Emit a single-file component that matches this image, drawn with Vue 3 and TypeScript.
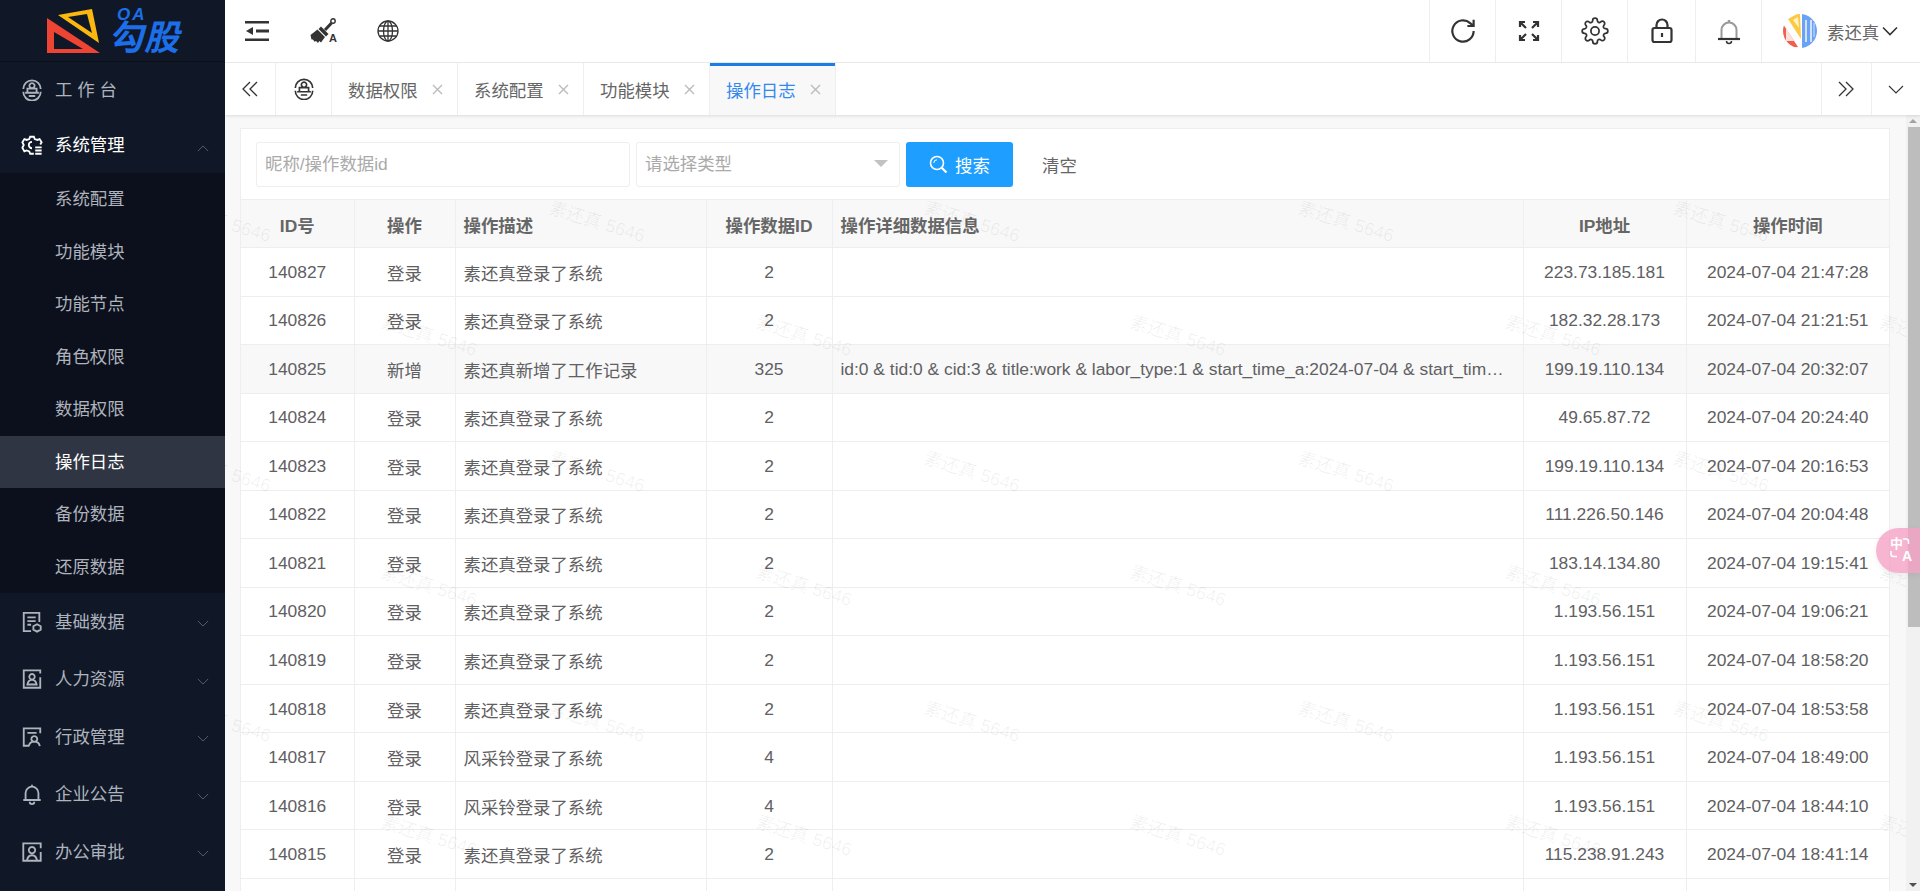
<template>
  <div class="layout">
    <aside class="sidebar">
      <div class="logo">
        <svg class="logo-mark" width="60" height="50" viewBox="0 0 60 50">
          <path d="M3 9V44H56Z M10 23V40H39Z" fill="#ee4433" fill-rule="evenodd" />
          <path d="M14 6L48 0L55 34Z M24 8L43 5L48 24Z" fill="#fbb80f" fill-rule="evenodd" />
        </svg>
        <div class="logo-text">
          <span class="logo-oa">OA</span>
          <span class="logo-name">勾股</span>
        </div>
      </div>
      <nav class="menu">
        <template v-for="item in menu" :key="item.label">
          <div class="menu-item" :class="{ open: item.open, short: item.short }">
            <svg class="menu-icon" viewBox="0 0 24 24" fill="none" stroke="currentColor" stroke-width="2">
              <path :d="item.icon" />
            </svg>
            <span class="menu-label">{{ item.label }}</span>
            <svg v-if="item.arrow" class="menu-arrow" :class="{ up: item.open }" viewBox="0 0 14 8" fill="none" stroke="currentColor" stroke-width="1.100">
              <path d="M1 1l6 6 6-6" />
            </svg>
          </div>
          <div v-if="item.open" class="submenu">
            <div v-for="sub in subMenu" :key="sub" class="submenu-item" :class="{ active: sub === '操作日志' }">{{ sub }}</div>
          </div>
        </template>
      </nav>
    </aside>

    <div class="main">
      <header class="topbar">
        <div class="tool first">
          <svg width="24" height="20" viewBox="0 0 24 20" fill="#333">
            <path d="M0 0h24v2.500H0zM0 17.500h24v2.500H0zM11 8.600h13v2.800H11zM8 6v8L1 10z" />
          </svg>
        </div>
        <div class="tool brush">
          <svg width="26" height="26" viewBox="0 0 26 26">
            <path d="M21.500 5L15 12" stroke="#333" stroke-width="3" fill="none" />
            <circle cx="23" cy="3" r="2.200" fill="none" stroke="#333" stroke-width="1.400" />
            <path d="M11 8.500l7.500 7.500-2.500 2.500-7.500-7.500z" fill="#333" />
            <path d="M7.500 11.500L15 19l-4 5.500L9.300 23 8 25l-2-2-1.500.7L3 21.500l-1.500 0L.5 17z" fill="#333" />
          </svg>
          <span class="brush-a">A</span>
        </div>
        <div class="tool globe">
          <svg width="22" height="22" viewBox="0 0 22 22" fill="none" stroke="#333" stroke-width="1.300">
            <circle cx="11" cy="11" r="10" />
            <ellipse cx="11" cy="11" rx="4.500" ry="10" />
            <path d="M11 1v20M1 11h20M2.500 6h17M2.500 16h17" />
          </svg>
        </div>
        <div class="spacer"></div>
        <div class="tool-btn">
          <svg width="30" height="30" viewBox="0 0 24 24" fill="none" stroke="#333" stroke-width="1.750">
            <path d="M20.500 12a8.500 8.500 0 1 1-2.800-6.300L20.500 8M20.500 3v5h-5" />
          </svg>
        </div>
        <div class="tool-btn">
          <svg width="22" height="22" viewBox="0 0 22 22" fill="none" stroke="#333" stroke-width="2.200">
            <path d="M2 7V2h5M2 2l6 6M15 2h5v5M20 2l-6 6M2 15v5h5M2 20l6-6M20 15v5h-5M20 20l-6-6" />
          </svg>
        </div>
        <div class="tool-btn">
          <svg width="28" height="28" viewBox="0 0 24 24" fill="none" stroke="#333" stroke-width="1.500">
            <circle cx="12" cy="12" r="3.500" />
            <path d="M19.400 15a1.650 1.650 0 0 0 .33 1.820l.06.06a2 2 0 0 1 0 2.830 2 2 0 0 1-2.830 0l-.06-.06a1.650 1.650 0 0 0-1.820-.33 1.650 1.650 0 0 0-1 1.510V21a2 2 0 0 1-2 2 2 2 0 0 1-2-2v-.09A1.650 1.650 0 0 0 9 19.400a1.650 1.650 0 0 0-1.820.33l-.06.06a2 2 0 0 1-2.830 0 2 2 0 0 1 0-2.830l.06-.06a1.650 1.650 0 0 0 .33-1.820 1.650 1.650 0 0 0-1.510-1H3a2 2 0 0 1-2-2 2 2 0 0 1 2-2h.09A1.650 1.650 0 0 0 4.600 9a1.650 1.650 0 0 0-.33-1.820l-.06-.06a2 2 0 0 1 0-2.830 2 2 0 0 1 2.830 0l.06.06a1.650 1.650 0 0 0 1.820.33H9a1.650 1.650 0 0 0 1-1.510V3a2 2 0 0 1 2-2 2 2 0 0 1 2 2v.09a1.650 1.650 0 0 0 1 1.510 1.650 1.650 0 0 0 1.820-.33l.06-.06a2 2 0 0 1 2.830 0 2 2 0 0 1 0 2.830l-.06.06a1.650 1.650 0 0 0-.33 1.820V9a1.650 1.650 0 0 0 1.510 1H21a2 2 0 0 1 2 2 2 2 0 0 1-2 2h-.09a1.650 1.650 0 0 0-1.510 1z" />
          </svg>
        </div>
        <div class="tool-btn wide">
          <svg width="24" height="26" viewBox="0 0 24 26" fill="none" stroke="#333" stroke-width="2.200">
            <rect x="2.500" y="10" width="19" height="14" rx="2" />
            <path d="M6.500 10V7a5.500 5.500 0 0 1 11 0v3" />
            <path d="M12 15v4" />
          </svg>
        </div>
        <div class="tool-btn">
          <svg width="24" height="27" viewBox="0 0 24 27" fill="none">
            <path d="M4.500 21V12a7.500 7.500 0 0 1 15 0v9" stroke="#999" stroke-width="2" />
            <path d="M12 2v2.500" stroke="#999" stroke-width="2.500" />
            <path d="M1 21h22" stroke="#333" stroke-width="2.200" />
            <path d="M9.500 23a2.500 2.500 0 0 0 5 0" stroke="#333" stroke-width="1.500" />
          </svg>
        </div>
        <div class="user">
          <svg class="avatar" width="34" height="34" viewBox="0 0 34 34">
            <clipPath id="avatar-clip"><circle cx="17" cy="17" r="17" /></clipPath>
            <g clip-path="url(#avatar-clip)">
              <rect width="34" height="34" fill="#fff" />
              <path d="M0 10l15 23-7 1H0z" fill="#f0604f" />
              <path d="M3 14l8 13-8 0z" fill="#fbe0dc" />
              <path d="M5 5l9-5 3 0 1 25z" fill="#fcc93f" />
              <path d="M10 6l5-3 1 11z" fill="#fff1c9" />
              <path d="M19 0h15v34H19z" fill="#6aa3f5" />
              <path d="M22 6h2v22h-2zM27 6h2v22h-2zM30.500 9h1v14h-1z" fill="#cfe1fb" />
            </g>
          </svg>
          <span class="user-name">素还真</span>
          <svg width="16" height="10" viewBox="0 0 16 10" fill="none" stroke="#333" stroke-width="1.600">
            <path d="M1 1.500l7 7 7-7" />
          </svg>
        </div>
      </header>

      <div class="tabbar">
        <div class="tab-tool left">
          <svg width="18" height="16" viewBox="0 0 18 16" fill="none" stroke="#333" stroke-width="1.300">
            <path d="M9 1L2 8l7 7M16 1L9 8l7 7" />
          </svg>
        </div>
        <div class="tab-home">
          <svg width="22" height="22" viewBox="0 0 24 24" fill="none" stroke="#333" stroke-width="1.800">
            <path :d="deskIcon" />
          </svg>
        </div>
        <div v-for="tab in tabs" :key="tab" class="tab" :class="{ active: tab === '操作日志' }">
          <span>{{ tab }}</span>
          <svg class="tab-close" width="11" height="11" viewBox="0 0 11 11" stroke="#bbb" stroke-width="1.400">
            <path d="M1 1l9 9M10 1l-9 9" />
          </svg>
        </div>
        <div class="spacer"></div>
        <div class="tab-tool right">
          <svg width="18" height="16" viewBox="0 0 18 16" fill="none" stroke="#333" stroke-width="1.300">
            <path d="M2 1l7 7-7 7M9 1l7 7-7 7" />
          </svg>
        </div>
        <div class="tab-tool last">
          <svg width="16" height="9" viewBox="0 0 16 9" fill="none" stroke="#333" stroke-width="1.100">
            <path d="M1 1l7 7 7-7" />
          </svg>
        </div>
      </div>

      <div class="content-wrap">
        <div class="content">
          <div class="card">
            <div class="filters">
              <input class="field name" placeholder="昵称/操作数据id" />
              <div class="select">
                <input class="field" placeholder="请选择类型" readonly />
                <i class="caret"></i>
              </div>
              <button class="btn-search">
                <svg width="19" height="19" viewBox="0 0 19 19" fill="none" stroke="#fff" stroke-width="1.600">
                  <circle cx="8" cy="8" r="6.500" />
                  <path d="M4.800 8a3.200 3.200 0 0 1 3.200-3.200" stroke-width="1" />
                  <path d="M12.500 12.500l5 5" stroke-width="2.200" />
                </svg>
                <span>搜索</span>
              </button>
              <button class="btn-clear">清空</button>
            </div>
            <table class="log-table">
              <colgroup>
                <col style="width: 113px" />
                <col style="width: 101px" />
                <col style="width: 251px" />
                <col style="width: 126px" />
                <col />
                <col style="width: 163px" />
                <col style="width: 203px" />
              </colgroup>
              <thead>
                <tr>
                  <th>ID号</th>
                  <th>操作</th>
                  <th class="left">操作描述</th>
                  <th>操作数据ID</th>
                  <th class="left">操作详细数据信息</th>
                  <th>IP地址</th>
                  <th>操作时间</th>
                </tr>
              </thead>
              <tbody>
                <tr v-for="row in rows" :key="row.id" :class="{ hover: row.detail }">
                  <td>{{ row.id }}</td>
                  <td>{{ row.action }}</td>
                  <td class="left">{{ row.desc }}</td>
                  <td>{{ row.dataId }}</td>
                  <td class="left detail">{{ row.detail }}</td>
                  <td>{{ row.ip }}</td>
                  <td>{{ row.time }}</td>
                </tr>
                <tr><td></td><td></td><td></td><td></td><td></td><td></td><td></td></tr>
              </tbody>
            </table>
          </div>
          <span
            v-for="(mark, i) in watermarks"
            :key="i"
            class="watermark"
            :style="{ left: mark.x + 'px', top: mark.y + 'px' }"
          >素还真 5646</span>
        </div>
        <div class="scrollbar">
          <i class="arrow-up"></i>
          <div class="thumb"></div>
          <div class="spacer"></div>
          <i class="arrow-down"></i>
        </div>
        <div class="translate">
          <svg class="translate-arcs" width="30" height="30" viewBox="0 0 30 30" fill="none" stroke="#fff" stroke-width="1.500">
            <path d="M15 3h3a2.500 2.500 0 0 1 2.500 2.500V8" />
            <path d="M3 15v3a2.500 2.500 0 0 0 2.500 2.500H9" />
          </svg>
          <span class="translate-zh">中</span>
          <span class="translate-en">A</span>
        </div>
      </div>
    </div>
  </div>
</template>

<script setup lang="ts">
interface MenuItem {
  label: string
  icon: string
  arrow: boolean
  open?: boolean
  short?: boolean
}

interface LogRow {
  id: number
  action: string
  desc: string
  dataId: number
  detail: string
  ip: string
  time: string
}

const deskIcon =
  'M2.500 11a9.500 9.500 0 0 1 19 0M2.500 14a9.500 9.500 0 0 0 19 0M12 4.500a2.800 2.800 0 1 0 .01 0M7 10.500h10v4.500H7zM4.500 15h15M8.500 18.500h7'

const menu: MenuItem[] = [
  { label: '工 作 台', icon: deskIcon, arrow: false, short: true },
  {
    label: '系统管理',
    icon: 'M14 21.500h-4l-1-2.500-2.800-1-2.500 1L1.500 15l1.500-3L1.500 9l2.200-3.500 2.500 1 2.800-1L10 3h4l1 2.500 2.800 1 2.500-1L22.500 9 21 11.500M12 8.500a3.500 3.500 0 1 0 0 7M15.500 14.500h7M15.500 18h7M15.500 21.500h7',
    arrow: true,
    open: true,
    short: true
  },
  {
    label: '基础数据',
    icon: 'M11 22H3V2h17v10M7 7h9M7 11h9M7 15h4M17.500 14.500l4 2.200v3.600l-4 2.200-4-2.200v-3.600z',
    arrow: true
  },
  {
    label: '人力资源',
    icon: 'M21 6V2.500H3v19h18V10M12 6.500a3 3 0 1 0 .01 0M7 18c.5-3 2.500-5 5-5s4.500 2 5 5z',
    arrow: true
  },
  {
    label: '行政管理',
    icon: 'M9 21.500H3v-19h18V8M7 7.500h10M14.500 11a3.200 3.200 0 1 0 .01 0M8.500 22c.5-3.500 3-5 6-5s5.500 1.500 6 5',
    arrow: true
  },
  {
    label: '企业公告',
    icon: 'M5 18v-7a7 7 0 0 1 14 0v7M2.500 18.500h19M12 2v2M9.500 20.500a2.500 2.500 0 0 0 5 0',
    arrow: true
  },
  {
    label: '办公审批',
    icon: 'M8 21.500H2.500v-19h19V8M21.500 12v9.500H16M12 6.500a3.500 3.500 0 1 0 .01 0M6.500 21.500c.5-3.500 2.500-6 5.500-6s5 2.500 5.500 6z',
    arrow: true
  }
]

const subMenu = ['系统配置', '功能模块', '功能节点', '角色权限', '数据权限', '操作日志', '备份数据', '还原数据']
const tabs = ['数据权限', '系统配置', '功能模块', '操作日志']

const login = (id: number, ip: string, time: string, name = '素还真', dataId = 2): LogRow => ({
  id,
  action: '登录',
  desc: `${name}登录了系统`,
  dataId,
  detail: '',
  ip,
  time: `2024-07-04 ${time}`
})

const rows: LogRow[] = [
  login(140827, '223.73.185.181', '21:47:28'),
  login(140826, '182.32.28.173', '21:21:51'),
  {
    id: 140825,
    action: '新增',
    desc: '素还真新增了工作记录',
    dataId: 325,
    detail:
      'id:0 & tid:0 & cid:3 & title:work & labor_type:1 & start_time_a:2024-07-04 & start_time_b:09:00 & end_time_a:2024-07-04 & end_time_b:18:00',
    ip: '199.19.110.134',
    time: '2024-07-04 20:32:07'
  },
  login(140824, '49.65.87.72', '20:24:40'),
  login(140823, '199.19.110.134', '20:16:53'),
  login(140822, '111.226.50.146', '20:04:48'),
  login(140821, '183.14.134.80', '19:15:41'),
  login(140820, '1.193.56.151', '19:06:21'),
  login(140819, '1.193.56.151', '18:58:20'),
  login(140818, '1.193.56.151', '18:53:58'),
  login(140817, '1.193.56.151', '18:49:00', '风采铃', 4),
  login(140816, '1.193.56.151', '18:44:10', '风采铃', 4),
  login(140815, '115.238.91.243', '18:41:14')
]

// the watermark repeats on two staggered grids, coordinates relative to the content area
const watermarks: { x: number; y: number }[] = []
for (let k = 0; k < 5; k++) {
  for (let r = 0; r < 3; r++) {
    watermarks.push({ x: 597 + 374.5 * (k - 1) - 225 - 50, y: 222 + 250 * r - 115 - 11 })
    watermarks.push({ x: 429 + 374.5 * k - 225 - 50, y: 336 + 250 * r - 115 - 11 })
  }
}
</script>

<style scoped>
.layout {
  display: flex;
  height: 891px;
  overflow: hidden;
  font-family: "Liberation Sans", "Noto Sans CJK SC", sans-serif;
  font-size: 17.4px;
  color: #5f6062;
}

.spacer {
  flex: 1;
}

/* sidebar */
.sidebar {
  width: 225px;
  flex: none;
  background: #101828;
  color: #aeb3bc;
  position: relative;
  z-index: 2;
}

.logo {
  height: 62px;
  box-sizing: border-box;
  border-bottom: 1px solid #0a0f1a;
  display: flex;
  padding-left: 44px;
}

.logo-mark {
  margin-top: 9px;
  flex: none;
}

.logo-text {
  display: flex;
  flex-direction: column;
  margin-left: 4px;
  color: #1c6fe8;
  font-style: italic;
  font-weight: 700;
  line-height: 1;
}

.logo-oa {
  font-size: 17px;
  margin: 6px 0 0 9px;
  letter-spacing: 2px;
}

.logo-name {
  font-size: 35px;
  margin-top: -3px;
  letter-spacing: 1px;
}

.menu-item {
  height: 57.5px;
  display: flex;
  align-items: center;
  padding-left: 21px;
  position: relative;
}

.menu-item.short {
  height: 55.5px;
}

.menu-item.open {
  color: #fff;
}

.menu-icon {
  width: 22px;
  height: 22px;
  flex: none;
}

.menu-label {
  margin-left: 12px;
  line-height: 24px;
}

.menu-arrow {
  position: absolute;
  left: 197px;
  top: 27px;
  width: 12px;
  height: 7px;
  color: #56627a;
}

.menu-arrow.up {
  transform: rotate(180deg);
}

.submenu {
  background: #0b101c;
}

.submenu-item {
  height: 52.5px;
  line-height: 52.5px;
  padding-left: 55px;
}

.submenu-item.active {
  background: #2f3542;
  color: #fff;
}

/* top bar */
.main {
  flex: 1;
  min-width: 0;
  display: flex;
  flex-direction: column;
}

.topbar {
  height: 63px;
  flex: none;
  box-sizing: border-box;
  border-bottom: 1px solid #eee;
  display: flex;
  align-items: center;
  background: #fff;
}

.tool {
  display: flex;
  align-items: center;
}

.tool.first {
  margin-left: 20px;
}

.tool.brush {
  margin-left: 41px;
  position: relative;
}

.brush-a {
  position: absolute;
  right: -1px;
  bottom: 0;
  font-size: 11px;
  font-weight: 700;
  color: #333;
  line-height: 11px;
}

.tool.globe {
  margin-left: 41px;
}

.tool-btn {
  width: 66px;
  height: 100%;
  box-sizing: border-box;
  border-left: 1px solid #eee;
  display: flex;
  align-items: center;
  justify-content: center;
}

.tool-btn.wide {
  width: 68px;
}

.user {
  width: 159px;
  height: 100%;
  box-sizing: border-box;
  border-left: 1px solid #eee;
  display: flex;
  align-items: center;
  padding-left: 21px;
}

.avatar {
  flex: none;
}

.user-name {
  margin-left: 10px;
  margin-right: 3px;
  color: #666;
}

/* tabs */
.tabbar {
  height: 52px;
  flex: none;
  display: flex;
  background: #fff;
  box-shadow: 0 1px 3px rgba(0, 0, 0, 0.12);
  position: relative;
  z-index: 1;
}

.tab-tool,
.tab-home {
  box-sizing: border-box;
  display: flex;
  align-items: center;
  justify-content: center;
}

.tab-tool.left {
  width: 50px;
}

.tab-home {
  width: 56px;
  border-left: 1px solid #eee;
}

.tab-tool.right,
.tab-tool.last {
  width: 49.5px;
  border-left: 1px solid #eee;
}

.tab {
  width: 126px;
  box-sizing: border-box;
  flex: none;
  border-left: 1px solid #eee;
  display: flex;
  align-items: center;
  padding-left: 16px;
  color: #666;
  position: relative;
}

.tab-close {
  position: absolute;
  left: 100px;
  top: 21px;
}

.tab.active {
  color: #3388ee;
  background: #f8f8f8;
  border-right: 1px solid #eee;
  width: 127px;
}

.tab.active::before {
  content: "";
  position: absolute;
  left: 0;
  right: 0;
  top: 0;
  height: 3px;
  background: #1e7ce8;
}

/* content */
.content-wrap {
  flex: 1;
  min-height: 0;
  display: flex;
  position: relative;
  background: #f8f8f8;
}

.content {
  flex: 1;
  min-width: 0;
  position: relative;
  overflow: hidden;
  padding: 13px 16px 0 15px;
}

.card {
  background: #fff;
  border: 1px solid #eee;
  border-bottom: 0;
}

.filters {
  height: 70px;
  box-sizing: border-box;
  padding: 13px 15px;
  display: flex;
  gap: 6px;
}

.field {
  width: 100%;
  height: 44.5px;
  box-sizing: border-box;
  border: 1px solid #eee;
  border-radius: 3px;
  padding: 0 8px;
  font: inherit;
  outline: none;
  background: #fff;
}

.field::placeholder {
  color: #aaa;
}

.field.name {
  width: 374px;
  flex: none;
}

.select {
  width: 264px;
  flex: none;
  position: relative;
}

.caret {
  position: absolute;
  right: 12px;
  top: 18px;
  border-style: solid;
  border-width: 7px 7px 0;
  border-color: #c2c2c2 transparent transparent;
}

.btn-search {
  width: 107px;
  height: 44.5px;
  border: 0;
  border-radius: 3px;
  background: #1e9fff;
  color: #fff;
  font: inherit;
  display: flex;
  align-items: center;
  justify-content: center;
  gap: 7px;
}

.btn-clear {
  border: 0;
  background: none;
  font: inherit;
  color: #666;
  padding: 0;
  margin-left: 23px;
}

.log-table {
  width: 100%;
  table-layout: fixed;
  border-collapse: collapse;
}

.log-table th,
.log-table td {
  box-sizing: border-box;
  border: 1px solid #eee;
  padding: 1px 8px 0;
  text-align: center;
  white-space: nowrap;
  overflow: hidden;
}

.log-table tr > :first-child {
  border-left: 0;
}

.log-table tr > :last-child {
  border-right: 0;
}

.log-table th {
  height: 48px;
  background: #f8f8f8;
  font-weight: 700;
  color: #666;
}

.log-table td {
  height: 48.54px;
}

.log-table .left {
  text-align: left;
}

.log-table .detail {
  padding-right: 16px;
  text-overflow: ellipsis;
}

.log-table tr.hover td {
  background: #f8f8f8;
}

.watermark {
  position: absolute;
  width: 100px;
  text-align: center;
  font-size: 18px;
  line-height: 22px;
  white-space: nowrap;
  color: rgba(0, 0, 0, 0.06);
  transform: rotate(17deg);
  pointer-events: none;
}

/* scrollbar + floating translate button */
.scrollbar {
  width: 14px;
  flex: none;
  background: #f1f1f1;
  display: flex;
  flex-direction: column;
  align-items: center;
}

.thumb {
  width: 12px;
  margin-left: 1px;
  height: 500px;
  background: #bdbdbd;
}

.arrow-up,
.arrow-down {
  width: 0;
  height: 0;
  margin: 4px 0;
  border-style: solid;
  border-color: transparent;
}

.arrow-up {
  border-width: 0 4px 4px;
  border-bottom-color: #a3a3a3;
}

.arrow-down {
  border-width: 4px 4px 0;
  border-top-color: #505050;
}

.translate {
  position: absolute;
  right: 0;
  top: 413px;
  width: 44px;
  height: 45px;
  border-radius: 23px 0 0 23px;
  background: rgba(246, 160, 197, 0.78);
  box-shadow: 0 2px 6px rgba(0, 0, 0, 0.06);
  color: #fff;
  z-index: 3;
}

.translate-arcs {
  position: absolute;
  left: 12px;
  top: 8px;
}

.translate-zh {
  position: absolute;
  left: 14px;
  top: 9px;
  font-size: 13px;
  line-height: 14px;
  font-weight: 700;
}

.translate-en {
  position: absolute;
  left: 26px;
  top: 20px;
  font-size: 14px;
  line-height: 16px;
  font-weight: 700;
}
</style>

<style>
html,
body {
  height: 100%;
  overflow: hidden;
}
</style>
